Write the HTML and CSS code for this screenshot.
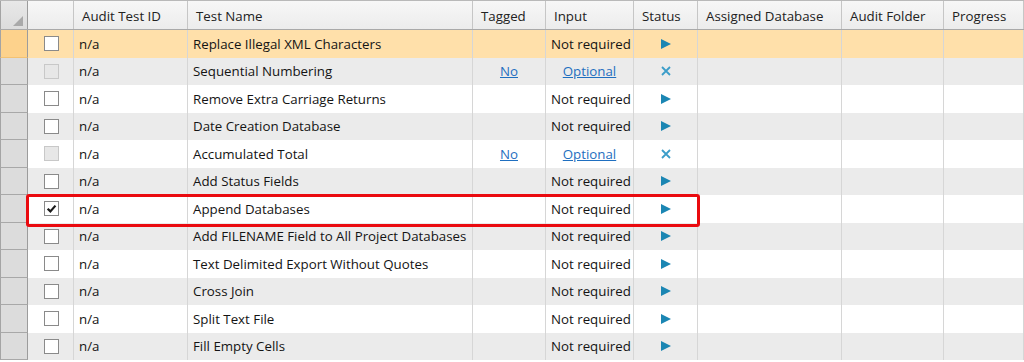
FILE: index.html
```html
<!DOCTYPE html>
<html>
<head>
<meta charset="utf-8">
<link rel="stylesheet" href="styles.css">
</head>
<body>
<div class="grid">
  <div class="row head">
    <div class="c rh corner"><span class="tri"></span></div>
    <div class="c"></div>
    <div class="c">Audit Test ID</div>
    <div class="c">Test Name</div>
    <div class="c">Tagged</div>
    <div class="c">Input</div>
    <div class="c">Status</div>
    <div class="c">Assigned Database</div>
    <div class="c">Audit Folder</div>
    <div class="c">Progress</div>
  </div>

  <div class="row sel">
    <div class="c rh"></div>
    <div class="c cb"><span class="box"></span></div>
    <div class="c">n/a</div>
    <div class="c">Replace Illegal XML Characters</div>
    <div class="c ctr"></div>
    <div class="c">Not required</div>
    <div class="c ctr"><span class="play"></span></div>
    <div class="c"></div><div class="c"></div><div class="c"></div>
  </div>

  <div class="row">
    <div class="c rh"></div>
    <div class="c cb"><span class="box dis"></span></div>
    <div class="c">n/a</div>
    <div class="c">Sequential Numbering</div>
    <div class="c ctr"><a class="lnk" href="#">No</a></div>
    <div class="c ctr"><a class="lnk" href="#">Optional</a></div>
    <div class="c ctr"><svg class="x" viewBox="0 0 10 10"><path d="M1 1L9 9M9 1L1 9"/></svg></div>
    <div class="c"></div><div class="c"></div><div class="c"></div>
  </div>

  <div class="row">
    <div class="c rh"></div>
    <div class="c cb"><span class="box"></span></div>
    <div class="c">n/a</div>
    <div class="c">Remove Extra Carriage Returns</div>
    <div class="c ctr"></div>
    <div class="c">Not required</div>
    <div class="c ctr"><span class="play"></span></div>
    <div class="c"></div><div class="c"></div><div class="c"></div>
  </div>

  <div class="row">
    <div class="c rh"></div>
    <div class="c cb"><span class="box"></span></div>
    <div class="c">n/a</div>
    <div class="c">Date Creation Database</div>
    <div class="c ctr"></div>
    <div class="c">Not required</div>
    <div class="c ctr"><span class="play"></span></div>
    <div class="c"></div><div class="c"></div><div class="c"></div>
  </div>

  <div class="row">
    <div class="c rh"></div>
    <div class="c cb"><span class="box dis"></span></div>
    <div class="c">n/a</div>
    <div class="c">Accumulated Total</div>
    <div class="c ctr"><a class="lnk" href="#">No</a></div>
    <div class="c ctr"><a class="lnk" href="#">Optional</a></div>
    <div class="c ctr"><svg class="x" viewBox="0 0 10 10"><path d="M1 1L9 9M9 1L1 9"/></svg></div>
    <div class="c"></div><div class="c"></div><div class="c"></div>
  </div>

  <div class="row">
    <div class="c rh"></div>
    <div class="c cb"><span class="box"></span></div>
    <div class="c">n/a</div>
    <div class="c">Add Status Fields</div>
    <div class="c ctr"></div>
    <div class="c">Not required</div>
    <div class="c ctr"><span class="play"></span></div>
    <div class="c"></div><div class="c"></div><div class="c"></div>
  </div>

  <div class="row">
    <div class="c rh"></div>
    <div class="c cb"><span class="box"><svg class="chk" viewBox="0 0 10 10"><path d="M1.5 5.2L4 7.6L8.6 2.4"/></svg></span></div>
    <div class="c">n/a</div>
    <div class="c">Append Databases</div>
    <div class="c ctr"></div>
    <div class="c">Not required</div>
    <div class="c ctr"><span class="play"></span></div>
    <div class="c"></div><div class="c"></div><div class="c"></div>
  </div>

  <div class="row">
    <div class="c rh"></div>
    <div class="c cb"><span class="box"></span></div>
    <div class="c">n/a</div>
    <div class="c">Add FILENAME Field to All Project Databases</div>
    <div class="c ctr"></div>
    <div class="c">Not required</div>
    <div class="c ctr"><span class="play"></span></div>
    <div class="c"></div><div class="c"></div><div class="c"></div>
  </div>

  <div class="row">
    <div class="c rh"></div>
    <div class="c cb"><span class="box"></span></div>
    <div class="c">n/a</div>
    <div class="c">Text Delimited Export Without Quotes</div>
    <div class="c ctr"></div>
    <div class="c">Not required</div>
    <div class="c ctr"><span class="play"></span></div>
    <div class="c"></div><div class="c"></div><div class="c"></div>
  </div>

  <div class="row">
    <div class="c rh"></div>
    <div class="c cb"><span class="box"></span></div>
    <div class="c">n/a</div>
    <div class="c">Cross Join</div>
    <div class="c ctr"></div>
    <div class="c">Not required</div>
    <div class="c ctr"><span class="play"></span></div>
    <div class="c"></div><div class="c"></div><div class="c"></div>
  </div>

  <div class="row">
    <div class="c rh"></div>
    <div class="c cb"><span class="box"></span></div>
    <div class="c">n/a</div>
    <div class="c">Split Text File</div>
    <div class="c ctr"></div>
    <div class="c">Not required</div>
    <div class="c ctr"><span class="play"></span></div>
    <div class="c"></div><div class="c"></div><div class="c"></div>
  </div>

  <div class="row">
    <div class="c rh"></div>
    <div class="c cb"><span class="box"></span></div>
    <div class="c">n/a</div>
    <div class="c">Fill Empty Cells</div>
    <div class="c ctr"></div>
    <div class="c">Not required</div>
    <div class="c ctr"><span class="play"></span></div>
    <div class="c"></div><div class="c"></div><div class="c"></div>
  </div>

  <div class="highlight"></div>
</div>
</body>
</html>
```

FILE: styles.css
```css
html, body {
  margin: 0;
  padding: 0;
  background: #ffffff;
}
body {
  font-family: "Open Sans", "Noto Sans", sans-serif;
  font-size: 13.3px;
  color: #141414;
  overflow: hidden;
}
.grid {
  position: relative;
  width: 1024px;
}
.row {
  display: grid;
  grid-template-columns: 28px 46px 114px 285px 73px 88px 64px 144px 102px 80px;
  height: 27.5px;
  background: #ffffff;
}
.row:nth-child(odd) {
  background: #ebebeb;
}
.row.sel {
  background: #ffe0aa;
}
.c {
  box-sizing: border-box;
  border-right: 1px solid #d6d6d6;
  display: flex;
  align-items: center;
  padding-left: 5px;
  white-space: nowrap;
  overflow: hidden;
}
.c.ctr {
  justify-content: center;
  padding-left: 0;
}
.c.cb {
  justify-content: center;
  padding-left: 0;
}
.row.head {
  height: 30px;
  background: linear-gradient(#f7f7f7, #ececec);
  border-top: 1px solid #b9b9b9;
  border-bottom: 1px solid #a9a9a9;
  box-sizing: border-box;
  color: #222;
}
.row.head .c {
  padding-left: 8px;
  border-right: 1px solid #c6c6c6;
  padding-top: 1px;
}
.rh {
  background: #dcdcdc;
  border-left: 1px solid #a4a4a4;
  border-right: 1px solid #9c9c9c !important;
  border-bottom: 1px solid #a8a8a8;
}
.row.sel .rh {
  background: #fdd28c;
  border-bottom-color: #f3c273;
}
.row.head .rh {
  background: linear-gradient(#e8e8e8, #dcdcdc);
  border-bottom: none;
  position: relative;
}
.tri {
  position: absolute;
  right: 4px;
  bottom: 3px;
  width: 0;
  height: 0;
  border-left: 10px solid transparent;
  border-bottom: 10px solid #a9a9a9;
}
.box {
  box-sizing: border-box;
  width: 15px;
  height: 15px;
  border: 1px solid #8a8a8a;
  background: #ffffff;
  display: flex;
  align-items: center;
  justify-content: center;
  margin-left: 2px;
}
.box.dis {
  border-color: #c8c8c8;
  background: #e7e7e7;
}
.chk {
  width: 11px;
  height: 11px;
  fill: none;
  stroke: #1a1a1a;
  stroke-width: 2;
}
.lnk {
  color: #1f6fc0;
  text-decoration: underline;
}
.play {
  width: 0;
  height: 0;
  border-top: 5px solid transparent;
  border-bottom: 5px solid transparent;
  border-left: 10px solid #1b86b3;
  margin-left: 1px;
}
.x {
  width: 10px;
  height: 10px;
  fill: none;
  stroke: #3b9dc9;
  stroke-width: 1.8;
  margin-left: 1px;
}
.highlight {
  position: absolute;
  left: 26px;
  top: 194px;
  width: 674px;
  height: 33px;
  box-sizing: border-box;
  border: 3px solid #ea0a0f;
  border-radius: 3px;
}
```
